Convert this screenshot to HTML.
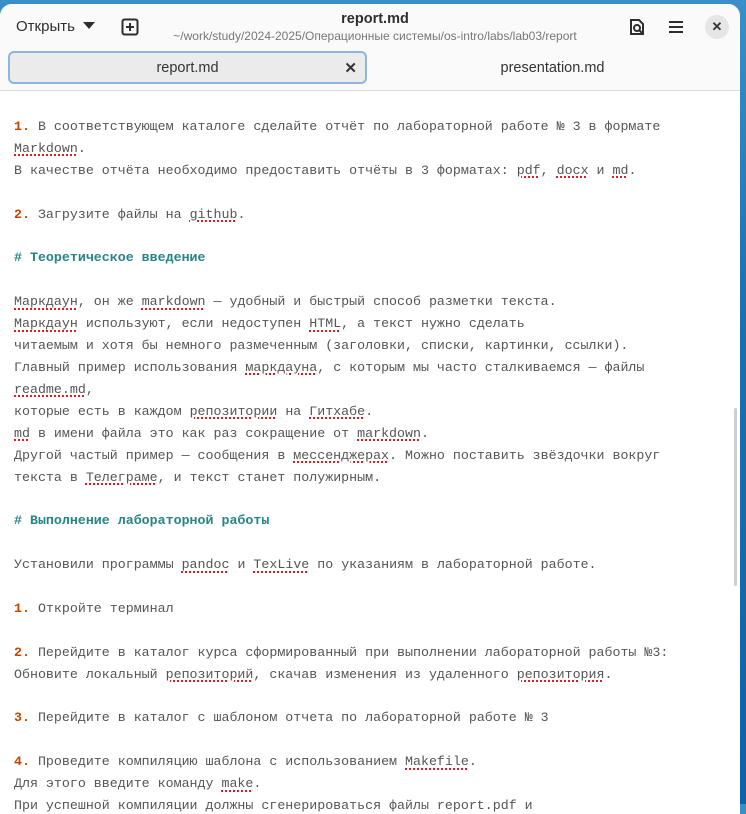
<!DOCTYPE html>
<html><head><meta charset="utf-8"><style>
html,body{margin:0;padding:0;width:746px;height:804px;overflow:hidden;background:linear-gradient(180deg,#3a8fc8 0%,#1c6fb0 40%,#0d62a8 100%);}
.win{position:absolute;left:0;top:4px;width:740px;height:810px;background:#fff;border-radius:12px 12px 0 0;overflow:hidden;font-family:"Liberation Sans","Noto Sans CJK SC",sans-serif;}
.hdr{position:absolute;left:0;top:0;width:740px;height:86px;background:#fafafa;border-bottom:1px solid #dcdcdc;}
.open{position:absolute;left:16px;top:14px;font-size:15px;color:#2e2e2e;}
.open:after{content:"";display:inline-block;margin-left:8px;border-left:6px solid transparent;border-right:6px solid transparent;border-top:7px solid #2e2e2e;vertical-align:2px;}
.title{position:absolute;left:0;width:750px;text-align:center;top:7px;font-size:14.5px;font-weight:bold;color:#2e2e2e;}
.sub{position:absolute;left:0;width:750px;text-align:center;top:25px;font-size:12px;color:#777;}
.tab1{position:absolute;left:8px;top:47px;width:355px;height:29px;background:#ebebeb;border:2px solid #8db6df;border-radius:6px;text-align:center;line-height:31px;font-size:14.5px;color:#333;}
.tab1 .x{position:absolute;right:8px;top:0;font-weight:bold;font-size:15px}
.tab2{position:absolute;left:370px;top:49px;width:365px;height:29px;text-align:center;line-height:31px;font-size:14.5px;color:#333;}
.close{position:absolute;left:705px;top:11px;width:24px;height:24px;border-radius:12px;background:#e6e6e6;text-align:center;line-height:24px;font-size:13px;font-weight:bold;color:#333;}
.ed{position:absolute;left:14px;top:112px;font-family:"Liberation Mono",monospace;font-size:13.3px;line-height:21.9px;color:#555;white-space:pre;}
.n{color:#c64600;font-weight:bold}
.h{color:#268585;font-weight:bold}
.s{text-decoration:underline dotted #e01b24;text-decoration-thickness:2px;text-underline-offset:3px}
.sb{position:absolute;left:734px;top:404px;width:3px;height:178px;background:#cfcfcf;border-radius:2px}
</style></head><body>
<div class="win">
<div class="hdr">
<div class="open">Открыть</div>
<svg style="position:absolute;left:121px;top:14px" width="18" height="18" viewBox="0 0 18 18"><rect x="1.5" y="1.5" width="15" height="15" rx="2" fill="none" stroke="#2e2e2e" stroke-width="2"/><path d="M9 5v8M5 9h8" stroke="#2e2e2e" stroke-width="2"/></svg>
<div class="title">report.md</div>
<div class="sub">~/work/study/2024-2025/Операционные системы/os-intro/labs/lab03/report</div>
<svg style="position:absolute;left:628px;top:14px" width="18" height="18" viewBox="0 0 18 18"><path d="M3 2h8l4 4v10H3z" fill="none" stroke="#2e2e2e" stroke-width="2"/><circle cx="9" cy="10" r="3" fill="none" stroke="#2e2e2e" stroke-width="2"/><path d="M11 12l3 3" stroke="#2e2e2e" stroke-width="2"/></svg>
<svg style="position:absolute;left:668px;top:16px" width="16" height="14" viewBox="0 0 16 14"><path d="M1 2h14M1 7h14M1 12h14" stroke="#2e2e2e" stroke-width="2"/></svg>
<div class="close">✕</div>
<div class="tab1">report.md<span class="x">✕</span></div>
<div class="tab2">presentation.md</div>
</div>
<div class="ed"><span class="n">1.</span> В соответствующем каталоге сделайте отчёт по лабораторной работе № 3 в формате
<span class="s">Markdown</span>.
В качестве отчёта необходимо предоставить отчёты в 3 форматах: <span class="s">pdf</span>, <span class="s">docx</span> и <span class="s">md</span>.

<span class="n">2.</span> Загрузите файлы на <span class="s">github</span>.

<span class="h"># Теоретическое введение</span>

<span class="s">Маркдаун</span>, он же <span class="s">markdown</span> — удобный и быстрый способ разметки текста.
<span class="s">Маркдаун</span> используют, если недоступен <span class="s">HTML</span>, а текст нужно сделать
читаемым и хотя бы немного размеченным (заголовки, списки, картинки, ссылки).
Главный пример использования <span class="s">маркдауна</span>, с которым мы часто сталкиваемся — файлы
<span class="s">readme.md</span>,
которые есть в каждом <span class="s">репозитории</span> на <span class="s">Гитхабе</span>.
<span class="s">md</span> в имени файла это как раз сокращение от <span class="s">markdown</span>.
Другой частый пример — сообщения в <span class="s">мессенджерах</span>. Можно поставить звёздочки вокруг
текста в <span class="s">Телеграме</span>, и текст станет полужирным.

<span class="h"># Выполнение лабораторной работы</span>

Установили программы <span class="s">pandoc</span> и <span class="s">TexLive</span> по указаниям в лабораторной работе.

<span class="n">1.</span> Откройте терминал

<span class="n">2.</span> Перейдите в каталог курса сформированный при выполнении лабораторной работы №3:
Обновите локальный <span class="s">репозиторий</span>, скачав изменения из удаленного <span class="s">репозитория</span>.

<span class="n">3.</span> Перейдите в каталог с шаблоном отчета по лабораторной работе № 3

<span class="n">4.</span> Проведите компиляцию шаблона с использованием <span class="s">Makefile</span>.
Для этого введите команду <span class="s">make</span>.
При успешной компиляции должны сгенерироваться файлы report.pdf и</div>
<div class="sb"></div>
</div>
</body></html>
